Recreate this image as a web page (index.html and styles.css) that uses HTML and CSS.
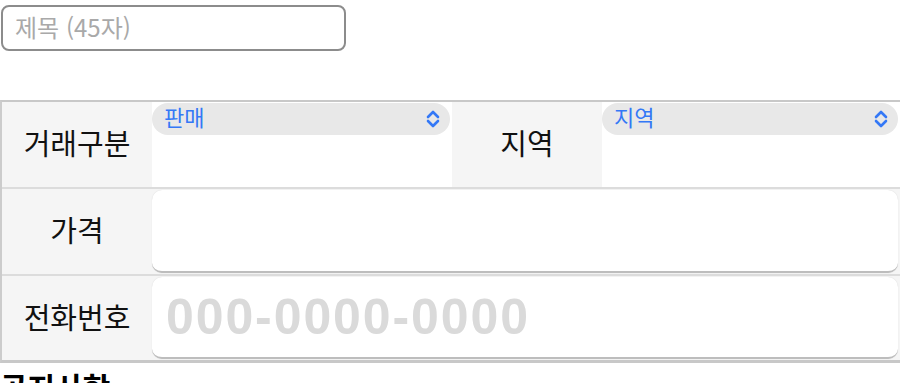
FILE: index.html
```html
<!DOCTYPE html>
<html lang="ko">
<head>
<meta charset="utf-8">
<link rel="stylesheet" href="styles.css">
</head>
<body>
<div class="page">
  <div class="title-input"><span class="ph">제목 (45자)</span></div>
  <div class="table">
    <div class="row row-first">
      <div class="label">거래구분</div>
      <div class="value-cell">
        <div class="select"><span class="sel-text">판매</span>
          <svg class="chev" width="16" height="20" viewBox="0 0 16 20"><path d="M3 8 L8 3 L13 8 M3 12 L8 17 L13 12" fill="none" stroke="#3478f6" stroke-width="2.6" stroke-linecap="round" stroke-linejoin="round"/></svg>
        </div>
      </div>
      <div class="label">지역</div>
      <div class="value-cell last">
        <div class="select"><span class="sel-text">지역</span>
          <svg class="chev" width="16" height="20" viewBox="0 0 16 20"><path d="M3 8 L8 3 L13 8 M3 12 L8 17 L13 12" fill="none" stroke="#3478f6" stroke-width="2.6" stroke-linecap="round" stroke-linejoin="round"/></svg>
        </div>
      </div>
    </div>
    <div class="row">
      <div class="label">가격</div>
      <div class="field"></div>
    </div>
    <div class="row row-last">
      <div class="label">전화번호</div>
      <div class="field"><span class="phone-ph">000-0000-0000</span></div>
    </div>
  </div>
  <h2 class="notice">공지사항</h2>
</div>
</body>
</html>
```
FILE: styles.css
```css
html, body {
  margin: 0;
  padding: 0;
  background: #ffffff;
  overflow: hidden;
}
body {
  font-family: "Noto Sans CJK KR", "Noto Sans", sans-serif;
  color: #111;
}
.page {
  width: 900px;
  height: 383px;
  overflow: hidden;
}
.title-input {
  box-sizing: border-box;
  margin: 5px 0 0 1px;
  width: 345px;
  height: 46px;
  border: 2px solid #8c8c8c;
  border-radius: 8px;
  display: flex;
  align-items: center;
  padding-left: 12px;
}
.ph {
  font-size: 24px;
  color: #a9a9a9;
  line-height: 1;
  margin-top: -2px;
}
.table {
  margin-top: 49px;
  border-top: 2px solid #c8c8c8;
  border-left: 2px solid #cccccc;
  border-bottom: 3px solid #c8c8c8;
  display: flex;
  flex-direction: column;
}
.row {
  display: flex;
  height: 85px;
  border-bottom: 2px solid #dcdcdc;
  background: #f5f5f5;
}
.row-last {
  height: 84px;
  border-bottom: none;
}
.label {
  width: 150px;
  flex: none;
  background: #f5f5f5;
  display: flex;
  align-items: center;
  justify-content: center;
  font-size: 29px;
  color: #111;
  line-height: 1;
  padding-bottom: 4px;
  box-sizing: border-box;
}
.value-cell {
  width: 300px;
  flex: none;
  background: #ffffff;
  padding-top: 1px;
  box-sizing: border-box;
}
.value-cell.last {
  width: 298px;
}
.select {
  height: 32px;
  width: 298px;
  background: #e8e8e8;
  border-radius: 16px;
  display: flex;
  align-items: center;
  justify-content: space-between;
  padding: 0 9px 0 12px;
  box-sizing: border-box;
}
.value-cell.last .select {
  width: 296px;
}
.sel-text {
  font-size: 22px;
  color: #3478f6;
  line-height: 1;
  margin-top: -6px;
}
.chev {
  display: block;
}
.field {
  flex: 1;
  margin: 1px 2px 1px 0;
  background: #ffffff;
  border-radius: 10px;
  border-bottom: 2px solid #bdbdbd;
  box-shadow: 0 0 1px #d0d0d0;
  display: flex;
  align-items: center;
  padding-left: 14px;
  box-sizing: border-box;
}
.phone-ph {
  font-family: "Liberation Sans", Arial, sans-serif;
  font-weight: bold;
  font-size: 50px;
  letter-spacing: 1.9px;
  color: #dadada;
  line-height: 1;
}
.notice {
  margin: 8px 0 0 0;
  font-size: 30px;
  font-weight: bold;
  line-height: 1;
  color: #000;
}
```
